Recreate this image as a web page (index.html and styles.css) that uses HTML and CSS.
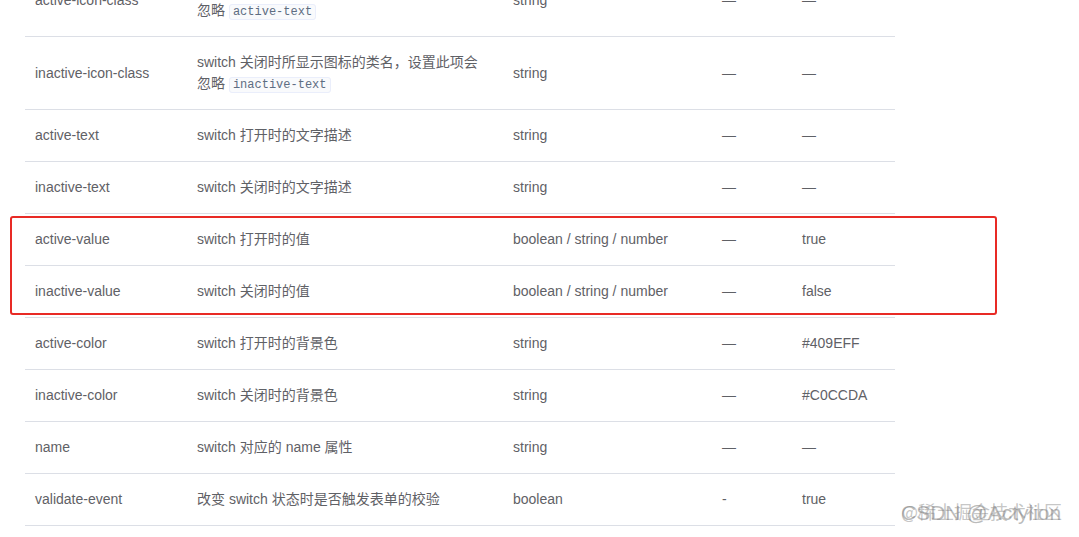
FILE: index.html
```html
<!DOCTYPE html>
<html lang="zh-CN">
<head>
<meta charset="utf-8">
<title>Switch Attributes</title>
<link rel="stylesheet" href="styles.css">
</head>
<body>
<div class="page">
  <table class="attr-table">
    <colgroup>
      <col class="c-name">
      <col class="c-desc">
      <col class="c-type">
      <col class="c-opts">
      <col class="c-def">
    </colgroup>
    <tbody>
      <tr>
        <td>active-icon-class</td>
        <td>switch 打开时所显示图标的类名，设置此项会<br>忽略 <code>active-text</code></td>
        <td>string</td>
        <td>—</td>
        <td>—</td>
      </tr>
      <tr>
        <td>inactive-icon-class</td>
        <td>switch 关闭时所显示图标的类名，设置此项会<br>忽略 <code>inactive-text</code></td>
        <td>string</td>
        <td>—</td>
        <td>—</td>
      </tr>
      <tr>
        <td>active-text</td>
        <td>switch 打开时的文字描述</td>
        <td>string</td>
        <td>—</td>
        <td>—</td>
      </tr>
      <tr>
        <td>inactive-text</td>
        <td>switch 关闭时的文字描述</td>
        <td>string</td>
        <td>—</td>
        <td>—</td>
      </tr>
      <tr>
        <td>active-value</td>
        <td>switch 打开时的值</td>
        <td>boolean / string / number</td>
        <td>—</td>
        <td>true</td>
      </tr>
      <tr>
        <td>inactive-value</td>
        <td>switch 关闭时的值</td>
        <td>boolean / string / number</td>
        <td>—</td>
        <td>false</td>
      </tr>
      <tr>
        <td>active-color</td>
        <td>switch 打开时的背景色</td>
        <td>string</td>
        <td>—</td>
        <td>#409EFF</td>
      </tr>
      <tr>
        <td>inactive-color</td>
        <td>switch 关闭时的背景色</td>
        <td>string</td>
        <td>—</td>
        <td>#C0CCDA</td>
      </tr>
      <tr>
        <td>name</td>
        <td>switch 对应的 name 属性</td>
        <td>string</td>
        <td>—</td>
        <td>—</td>
      </tr>
      <tr>
        <td>validate-event</td>
        <td>改变 switch 状态时是否触发表单的校验</td>
        <td>boolean</td>
        <td>-</td>
        <td>true</td>
      </tr>
    </tbody>
  </table>
  <div class="highlight-box"></div>
  <div class="watermark">
    <span class="wm-a">@稀土掘金技术社区</span>
    <span class="wm-b">CSDN @Actylion</span>
  </div>
</div>
</body>
</html>
```

FILE: styles.css
```css
html, body {
  margin: 0;
  padding: 0;
  background: #ffffff;
}

body {
  width: 1079px;
  height: 537px;
  overflow: hidden;
  font-family: "Liberation Sans", Arial, "Noto Sans CJK SC", sans-serif;
  color: #606266;
}

.page {
  position: relative;
  width: 1079px;
  height: 537px;
  overflow: hidden;
}

.attr-table {
  border-collapse: collapse;
  table-layout: fixed;
  width: 870px;
  margin: -36px 0 0 25px;
  font-size: 14px;
  line-height: 21px;
}

.c-name { width: 162px; }
.c-desc { width: 316px; }
.c-type { width: 209px; }
.c-opts { width: 80px; }
.c-def  { width: 103px; }

.attr-table td {
  padding: 15px 10px;
  border-bottom: 1px solid #dcdfe6;
  vertical-align: middle;
  text-align: left;
  color: #5f6166;
  white-space: nowrap;
}

.attr-table code {
  font-family: "Liberation Mono", "DejaVu Sans Mono", monospace;
  font-size: 12px;
  color: #5e6d82;
  background: #f9fafc;
  border: 1px solid #eaeefb;
  border-radius: 3px;
  padding: 0 3px;
  line-height: 16px;
}

.highlight-box {
  position: absolute;
  left: 10px;
  top: 216px;
  width: 983px;
  height: 95px;
  border: 2px solid #e82a25;
  border-radius: 3px;
}

.watermark {
  position: absolute;
  left: 901px;
  top: 499px;
  width: 175px;
  height: 28px;
}

.wm-a, .wm-b {
  position: absolute;
  left: 0;
  white-space: nowrap;
}

.wm-a {
  top: 0;
  font-family: "Noto Sans CJK SC", "Liberation Sans", sans-serif;
  font-size: 18px;
  line-height: 24px;
  color: rgba(150, 150, 150, 0.55);
}

.wm-b {
  top: 2px;
  font-family: "Liberation Sans", Arial, sans-serif;
  font-size: 21px;
  line-height: 24px;
  color: rgba(120, 120, 120, 0.5);
}
```
